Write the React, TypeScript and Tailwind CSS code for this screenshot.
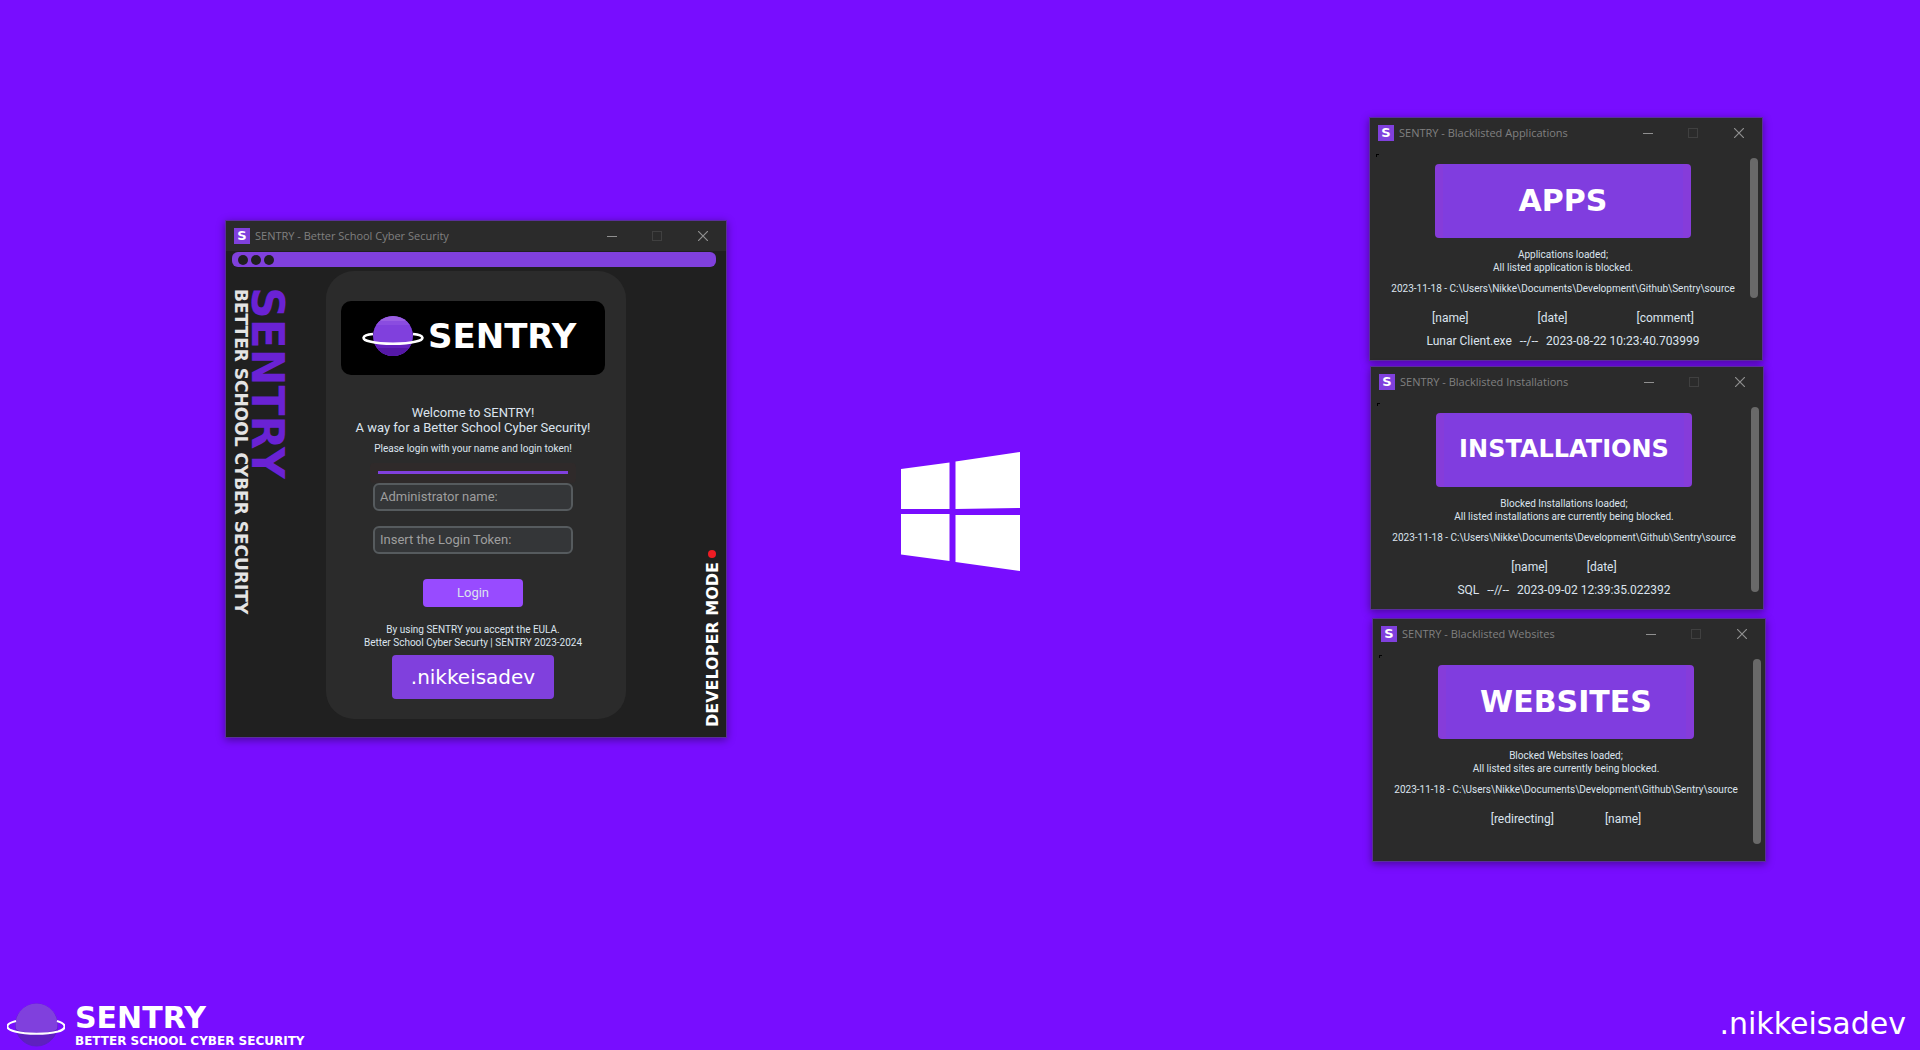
import React, { ReactNode } from "react";

const display = "font-['DejaVu_Sans',sans-serif] font-bold";

function Planet({ className }: { className: string }) {
  return (
    <svg viewBox="0 0 62 44" className={className} aria-hidden="true">
      <defs>
        <clipPath id="planet-disc">
          <circle cx="31" cy="20" r="20" />
        </clipPath>
      </defs>
      <g clipPath="url(#planet-disc)">
        <rect width="62" height="44" fill="#8040dd" />
        <rect y="0" width="62" height="5" fill="#9a5fe3" />
        <rect y="5" width="62" height="4" fill="#8a4ce0" />
        <path d="M0 22 Q0 28 31 28 Q62 28 62 22 V44 H0Z" fill="#6420bd" />
        <path d="M0 32 H62 V44 H0Z" fill="#5518a6" />
      </g>
      <path
        d="M11 18 C-1 19 -1 24 8 25.500 C20 28.500 42 28.500 54 25.500 C63 24 63 19 51 18"
        fill="none"
        stroke="#fff"
        strokeWidth="2.6"
      />
    </svg>
  );
}

function FooterPlanet() {
  return (
    <svg viewBox="0 0 58 44" className="h-11 w-[58px] shrink-0" aria-hidden="true">
      <circle cx="29.500" cy="22" r="21" fill="#5f20bf" stroke="#5b20c4" />
      <path d="M9 26 A21 21 0 1 1 50 26 C45 31 14 31 9 26Z" fill="#8040dd" />
      <path
        d="M9 18 C-3 21 -2 26 8 28.500 C20 31.500 39 31.500 51 28.500 C60 26 60 21 50 18"
        fill="none"
        stroke="#fff"
        strokeWidth="2.200"
      />
    </svg>
  );
}

function Window({ title, className, children }: { title: string; className: string; children: ReactNode }) {
  return (
    <section
      className={`absolute flex flex-col border border-[#5a2e9c] bg-[#2b2b2b] shadow-[0_2px_8px_rgba(0,0,0,0.4)] ${className}`}
    >
      <header className="flex h-[30px] shrink-0 items-center bg-[#2b2b2b] pl-2">
        <span
          className={`${display} flex h-4 w-4 items-center justify-center bg-[#8040dd] text-[13px] leading-4 text-white`}
        >
          S
        </span>
        <h2 className="ml-[5px] flex-1 font-['Open_Sans',sans-serif] text-[11px] whitespace-nowrap text-[#808080]">
          {title}
        </h2>
        <button aria-label="Minimize" className="flex h-full w-[45px] items-center justify-center">
          <svg viewBox="0 0 10 10" className="h-2.5 w-2.5" stroke="#909090">
            <path d="M0 5.500H10" />
          </svg>
        </button>
        <button aria-label="Maximize" disabled className="flex h-full w-[45px] items-center justify-center">
          <svg viewBox="0 0 10 10" className="h-2.5 w-2.5" stroke="#404040" fill="none">
            <rect x=".5" y=".5" width="9" height="9" />
          </svg>
        </button>
        <button aria-label="Close" className="flex h-full w-[47px] items-center justify-center">
          <svg viewBox="0 0 10 10" className="h-2.5 w-2.5" stroke="#909090" strokeWidth="1.200">
            <path d="M0 0L10 10M10 0L0 10" />
          </svg>
        </button>
      </header>
      {children}
    </section>
  );
}

type ListProps = {
  title: string;
  banner: string;
  bannerSize: string;
  status: string;
  detail: string;
  columns: string[];
  columnGap: string;
  row?: string[];
  position: string;
  thumb: string;
};

function ListWindow(p: ListProps) {
  return (
    <Window title={p.title} className={`w-[394px] ${p.position}`}>
      <div className="flex h-[212px] font-[Roboto,sans-serif] text-[#dce4ee]">
        <span className="mt-1.5 ml-1.5 h-[3px] w-[3px] border-t border-l border-black" />
        <div className="flex min-w-0 flex-1 flex-col items-center pt-4 pr-[3px]">
          <div
            className={`${display} flex h-[74px] w-64 items-center justify-center rounded border-x-8 border-[#863cda] bg-[#803ddf] pb-0.5 text-white ${p.bannerSize}`}
          >
            {p.banner}
          </div>
          <p className="mt-2.5 text-center text-[10px] leading-[13px]">
            {p.status}
            <br />
            {p.detail}
          </p>
          <p className="mt-2 text-[10px] leading-[13px] whitespace-nowrap">
            2023-11-18 - C:\Users\Nikke\Documents\Development\Github\Sentry\source
          </p>
          <div className={`mt-3 flex text-xs leading-[23px] ${p.columnGap}`}>
            {p.columns.map((c) => (
              <span key={c}>{c}</span>
            ))}
          </div>
          {p.row && (
            <div className="flex gap-2 text-xs leading-[23px] whitespace-nowrap">
              {p.row.map((c) => (
                <span key={c}>{c}</span>
              ))}
            </div>
          )}
        </div>
        <div className={`mt-2.5 mr-1 w-2 shrink-0 rounded-sm bg-[#696969] ${p.thumb}`} />
      </div>
    </Window>
  );
}

function Field({ id, label }: { id: string; label: string }) {
  return (
    <input
      id={id}
      aria-label={label}
      placeholder={label}
      className="h-7 w-[200px] rounded-md border-2 border-[#565b5e] bg-[#343638] px-[5px] pb-0.5 text-[13px] text-[#dce4ee] placeholder:text-[#9e9e9e]"
    />
  );
}

function LoginWindow() {
  return (
    <Window title="SENTRY - Better School Cyber Security" className="top-[220px] left-[225px] w-[502px]">
      <div className="bg-[#202020] px-1.5 pt-px pb-[18px] font-[Roboto,sans-serif] text-[#dce4ee]">
        <div className="mr-1 flex h-[15px] items-center gap-[3px] rounded-md bg-[#8040dd] pl-1.5">
          <span className="h-2.5 w-2.5 rounded-full bg-[#202020]" />
          <span className="h-2.5 w-2.5 rounded-full bg-[#202020]" />
          <span className="h-2.5 w-2.5 rounded-full bg-[#202020]" />
        </div>
        <div className="mt-1 flex">
          <div className="flex w-[94px] items-start pt-[18px]">
            <span
              className={`${display} w-[18px] text-[17px] leading-[18px] whitespace-nowrap text-[#e4e4e4] [writing-mode:vertical-rl]`}
            >
              BETTER SCHOOL CYBER SECURITY
            </span>
            <span
              className={`${display} -mt-0.5 ml-px text-[44px] leading-[32px] text-[#6a22d4] [writing-mode:vertical-rl]`}
            >
              SENTRY
            </span>
          </div>
          <form className="flex h-[448px] w-[300px] flex-col items-center rounded-[28px] bg-[#2b2b2b] pt-[30px] pr-1.5">
            <div className="flex h-[74px] w-[264px] items-center rounded-[10px] bg-black pl-[21px] text-white">
              <Planet className="h-11 w-[62px] shrink-0" />
              <span className={`${display} ml-1 -mt-1 text-[34px] leading-10`}>SENTRY</span>
            </div>
            <p className="mt-[30px] text-center text-[13px] leading-[15px] whitespace-nowrap">
              Welcome to SENTRY!
              <br />A way for a Better School Cyber Security!
            </p>
            <p className="mt-[7px] text-[10px] leading-[13px] whitespace-nowrap">
              Please login with your name and login token!
            </p>
            <div className="mt-2 flex h-5 w-[206px] shrink-0 items-start justify-center rounded bg-[#2f2a2a] pt-2">
              <span className="h-[3px] w-[190px] bg-[#8040dd]" />
            </div>
            <Field id="admin-name" label="Administrator name:" />
            <div className="h-[15px]" />
            <Field id="login-token" label="Insert the Login Token:" />
            <button type="button" className="mt-[25px] h-7 w-[100px] rounded bg-[#984bff] text-[13px]">
              Login
            </button>
            <p className="mt-4 text-center text-[10px] leading-[13px] whitespace-nowrap">
              By using SENTRY you accept the EULA.
              <br />
              Better School Cyber Securty | SENTRY 2023-2024
            </p>
            <button
              type="button"
              className="mt-1.5 h-11 w-[162px] rounded bg-[#8040dd] font-['DejaVu_Sans',sans-serif] text-xl text-white"
            >
              .nikkeisadev
            </button>
          </form>
          <div className="flex flex-1 flex-col items-end justify-end gap-1">
            <span className="mr-1 h-2 w-2 rounded-full bg-[#ee1c24]" />
            <span
              className={`${display} -mb-2 w-[14px] rotate-180 text-[16px] leading-[14px] whitespace-nowrap text-white [writing-mode:vertical-rl]`}
            >
              DEVELOPER MODE
            </span>
          </div>
        </div>
      </div>
    </Window>
  );
}

export default function App() {
  return (
    <main className="relative flex min-h-screen flex-col overflow-hidden bg-[#780dff]">
      <LoginWindow />

      <div className="flex flex-1 items-center justify-center pt-5">
        <svg viewBox="0 0 119 119" className="h-[119px] w-[119px]" fill="#fff" role="img" aria-label="Windows">
          <path d="M0 17L48.500 10.500V57H0ZM54.500 9.500L119 0V56L54.500 57ZM0 62H48.500V109L0 102.500ZM54.500 63H119V119L54.500 110Z" />
        </svg>
      </div>

      <ListWindow
        title="SENTRY - Blacklisted Applications"
        position="top-[117px] right-[157px]"
        banner="APPS"
        bannerSize="text-[30px]"
        status="Applications loaded;"
        detail="All listed application is blocked."
        columns={["[name]", "[date]", "[comment]"]}
        columnGap="gap-[69px]"
        row={["Lunar Client.exe", "--/--", "2023-08-22 10:23:40.703999"]}
        thumb="h-[140px]"
      />
      <ListWindow
        title="SENTRY - Blacklisted Installations"
        position="top-[366px] right-[156px]"
        banner="INSTALLATIONS"
        bannerSize="text-[24px]"
        status="Blocked Installations loaded;"
        detail="All listed installations are currently being blocked."
        columns={["[name]", "[date]"]}
        columnGap="gap-[39px]"
        row={["SQL", "--//--", "2023-09-02 12:39:35.022392"]}
        thumb="h-[185px]"
      />
      <ListWindow
        title="SENTRY - Blacklisted Websites"
        position="top-[618px] right-[154px]"
        banner="WEBSITES"
        bannerSize="text-[30px]"
        status="Blocked Websites loaded;"
        detail="All listed sites are currently being blocked."
        columns={["[redirecting]", "[name]"]}
        columnGap="gap-[51px]"
        thumb="h-[185px]"
      />

      <footer className="flex items-end justify-between pr-[14px] pb-0.5 pl-[7px] text-white">
        <div className="flex items-center gap-2.5">
          <FooterPlanet />
          <div className={`${display} flex flex-col`}>
            <span className="text-[30px] leading-8">SENTRY</span>
            <span className="text-xs leading-[14px]">BETTER SCHOOL CYBER SECURITY</span>
          </div>
        </div>
        <span className="mb-1.5 font-['DejaVu_Sans',sans-serif] text-[30px] leading-9">.nikkeisadev</span>
      </footer>
    </main>
  );
}
